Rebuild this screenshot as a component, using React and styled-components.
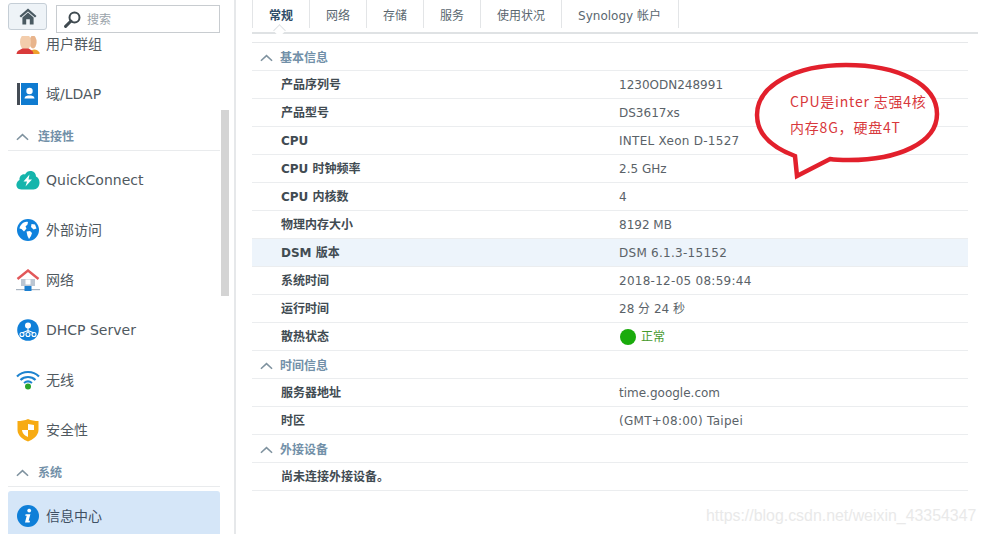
import React from "react";
import styled, { createGlobalStyle } from "styled-components";

const sans = `"DejaVu Sans", "Noto Sans CJK SC", sans-serif`;

const GlobalStyle = createGlobalStyle`
    html, body {
        margin: 0;
        padding: 0;
        background: #fff;
        overflow: hidden;
    }
    * {
        box-sizing: border-box;
    }
`;

const Chevron = () => (
    <ChevronSvg viewBox="0 0 14 8">
        <path d="M1 7 L7 1.5 L13 7" fill="none" stroke="#7f929f" strokeWidth="1.7" />
    </ChevronSvg>
);

const HomeIcon = () => (
    <svg width="18" height="17" viewBox="0 0 18 17">
        <path d="M9 0.5 L0.5 8 L2 9.6 L9 3.4 L16 9.6 L17.5 8 Z" fill="#4a5a62" />
        <path d="M3.4 9.4 L9 4.6 L14.6 9.4 V16.5 H10.8 V11.2 H7.2 V16.5 H3.4 Z" fill="#4a5a62" />
    </svg>
);

const SearchIcon = () => (
    <svg width="17" height="17" viewBox="0 0 17 17">
        <circle cx="10.5" cy="6.5" r="5" fill="none" stroke="#3f4a50" strokeWidth="2" />
        <path d="M7 10 L1.6 15.4" stroke="#3f4a50" strokeWidth="3" strokeLinecap="round" />
    </svg>
);

const UsersIcon = () => (
    <svg width="24" height="24" viewBox="0 0 24 24">
        <ellipse cx="17" cy="10" rx="3.6" ry="6.5" fill="#e8b48c" />
        <path d="M14 20 C15 17 21 16 23.5 20.5 V22 H14 Z" fill="#eea12c" />
        <ellipse cx="9.5" cy="10" rx="5.5" ry="8" fill="#f3cdac" />
        <path d="M0.5 22 C1 18 5 17.5 6.5 16.5 H12.5 C14 17.5 17 18 17.5 22 Z" fill="#d93a3a" />
    </svg>
);

const LdapIcon = () => (
    <svg width="22" height="22" viewBox="0 0 22 22">
        <rect x="0" y="0" width="3" height="22" fill="#444c55" />
        <rect x="4" y="0" width="17" height="22" fill="#0f7bd0" />
        <circle cx="12.5" cy="8" r="3.2" fill="#fff" />
        <path d="M7.5 15.5 C8 12.5 10.5 12.5 12.5 12.5 C14.5 12.5 17 12.5 17.5 15.5 Z" fill="#fff" />
    </svg>
);

const QuickConnectIcon = () => (
    <svg width="24" height="20" viewBox="0 0 24 20">
        <path d="M5.5 19.5 C1.5 19.5 0 16.5 0.5 14 C1 11.5 2.5 10.5 3.5 10 C3 6 6.5 3.5 9 4.5 C10.5 1.5 13 0.5 15.5 1 C18.5 1.5 20 4 20 6.5 C22.5 7.5 23.5 10 23.5 12.5 C23.5 16.5 21 19.5 17.5 19.5 Z" fill="#15b5ac" />
        <path d="M13.5 4.5 L7.5 11.5 H11 L9.5 16.5 L16 9.5 H12.5 Z" fill="#fff" />
    </svg>
);

const GlobeIcon = () => (
    <svg width="22" height="22" viewBox="0 0 22 22">
        <circle cx="11" cy="11" r="11" fill="#0f82dd" />
        <path d="M4 6 C6 3 9 2.5 11 3 L10.5 5.5 L8.5 7.5 L9.5 9.5 L7 12.5 L4.5 10 L2.5 9.5 C2.7 8 3.2 7 4 6 Z" fill="#fff" />
        <path d="M9.5 12.5 L13 12 L15 14 L14 17 L12 20 L10.5 17 Z" fill="#fff" />
        <path d="M14.5 5 L18 5.5 L19.5 9.5 L16.5 10.5 L14 8 Z" fill="#fff" />
    </svg>
);

const NetworkIcon = () => (
    <svg width="24" height="23" viewBox="0 0 24 23">
        <path d="M5 10 H19 V17 H5 Z" fill="#bcc6d2" />
        <rect x="9.5" y="10.5" width="5" height="5" fill="#fff" />
        <path d="M1.5 10 L12 1.5 L22.5 10" fill="none" stroke="#e2585a" strokeWidth="2.4" />
        <rect x="0" y="20" width="24" height="1.2" fill="#a9b4c0" />
        <rect x="8.5" y="17" width="7" height="5" fill="#1b7fd0" />
    </svg>
);

const DhcpIcon = () => (
    <svg width="22" height="22" viewBox="0 0 22 22">
        <circle cx="11" cy="11" r="10.8" fill="#0f7fd8" />
        <circle cx="11" cy="6.5" r="3" fill="#fff" />
        <path d="M11 9 V13 M11 11.5 L5 14 M11 11.5 L17 14" stroke="#fff" strokeWidth="1.1" fill="none" />
        <circle cx="5" cy="15.5" r="2" fill="none" stroke="#fff" strokeWidth="1.1" />
        <circle cx="11" cy="15.5" r="2" fill="none" stroke="#fff" strokeWidth="1.1" />
        <circle cx="17" cy="15.5" r="2" fill="none" stroke="#fff" strokeWidth="1.1" />
    </svg>
);

const WifiIcon = () => (
    <svg width="24" height="20" viewBox="0 0 24 20">
        <path d="M1 6.5 C7 0.5 17 0.5 23 6.5" fill="none" stroke="#1d83cf" strokeWidth="2.2" />
        <path d="M4.5 10 C8.5 6 15.5 6 19.5 10" fill="none" stroke="#1d83cf" strokeWidth="2.2" />
        <path d="M8 13 C10.5 11 13.5 11 16 13" fill="none" stroke="#1d83cf" strokeWidth="2" />
        <circle cx="12" cy="16.5" r="3" fill="#2aa42a" />
    </svg>
);

const ShieldIcon = () => (
    <svg width="22" height="23" viewBox="0 0 22 23">
        <path d="M0.5 2 C4 2 8 1.5 11 0 C14 1.5 18 2 21.5 2 V11 C21.5 17 15 21 11 22.5 C7 21 0.5 17 0.5 11 Z" fill="#f7ab13" />
        <path d="M11 5 C13 5.5 15 5.8 17 6 V11 H11 Z" fill="#fff" />
        <path d="M5 11 H11 V18 C8.5 17 5.5 15 5 11 Z" fill="#fff" />
    </svg>
);

const InfoIcon = () => (
    <svg width="22" height="22" viewBox="0 0 22 22">
        <circle cx="11" cy="11" r="11" fill="#0f7fd8" />
        <circle cx="12.2" cy="5.6" r="1.9" fill="#fff" />
        <path d="M8.6 9.2 H13.4 L11.6 15.8 H13 L12.6 17.4 H8 L9.7 10.8 H8.2 Z" fill="#fff" />
    </svg>
);

const tabs = ["常规", "网络", "存储", "服务", "使用状况", "Synology 帐户"];

const sections = [
    {
        title: "基本信息",
        rows: [
            { label: "产品序列号", value: "1230ODN248991" },
            { label: "产品型号", value: "DS3617xs" },
            { label: "CPU", value: "INTEL Xeon D-1527", wide: true },
            { label: "CPU 时钟频率", value: "2.5 GHz" },
            { label: "CPU 内核数", value: "4" },
            { label: "物理内存大小", value: "8192 MB" },
            { label: "DSM 版本", value: "DSM 6.1.3-15152", active: true, wide: true },
            { label: "系统时间", value: "2018-12-05 08:59:44", wide: true },
            { label: "运行时间", value: "28 分 24 秒" },
            { label: "散热状态", status: "正常" },
        ],
    },
    {
        title: "时间信息",
        rows: [
            { label: "服务器地址", value: "time.google.com" },
            { label: "时区", value: "(GMT+08:00) Taipei", wide: true },
        ],
    },
    {
        title: "外接设备",
        rows: [{ label: "尚未连接外接设备。", value: "" }],
    },
];

const App = () => {
    return (
        <Page>
            <GlobalStyle />
            <Sidebar>
                <TopBar>
                    <HomeButton>
                        <HomeIcon />
                    </HomeButton>
                    <SearchBox>
                        <SearchIcon />
                        <SearchText>搜索</SearchText>
                    </SearchBox>
                </TopBar>
                <NavList>
                    <NavItem $first>
                        <IconSlot><UsersIcon /></IconSlot>用户群组
                    </NavItem>
                    <NavItem>
                        <IconSlot><LdapIcon /></IconSlot>域/LDAP
                    </NavItem>
                    <NavSection>
                        <Chevron />
                        连接性
                    </NavSection>
                    <NavItem>
                        <IconSlot><QuickConnectIcon /></IconSlot>QuickConnect
                    </NavItem>
                    <NavItem>
                        <IconSlot><GlobeIcon /></IconSlot>外部访问
                    </NavItem>
                    <NavItem>
                        <IconSlot><NetworkIcon /></IconSlot>网络
                    </NavItem>
                    <NavItem>
                        <IconSlot><DhcpIcon /></IconSlot>DHCP Server
                    </NavItem>
                    <NavItem>
                        <IconSlot><WifiIcon /></IconSlot>无线
                    </NavItem>
                    <NavItem>
                        <IconSlot><ShieldIcon /></IconSlot>安全性
                    </NavItem>
                    <NavSection>
                        <Chevron />
                        系统
                    </NavSection>
                    <NavItem $active>
                        <IconSlot><InfoIcon /></IconSlot>信息中心
                    </NavItem>
                </NavList>
                <ScrollThumb />
            </Sidebar>

            <Main>
                <TabBar>
                    {tabs.map((tab, i) => (
                        <Tab key={tab} $active={i === 0}>
                            {tab}
                        </Tab>
                    ))}
                    <TabNotch />
                </TabBar>
                <Details>
                    {sections.map((section) => (
                        <React.Fragment key={section.title}>
                            <SectionHead>
                                <Chevron />
                                {section.title}
                            </SectionHead>
                            {section.rows.map((row) => (
                                <Row key={row.label} $active={row.active}>
                                    <Label>{row.label}</Label>
                                    {row.status ? (
                                        <Status>
                                            <StatusDot />
                                            {row.status}
                                        </Status>
                                    ) : (
                                        <Value $wide={row.wide}>{row.value}</Value>
                                    )}
                                </Row>
                            ))}
                        </React.Fragment>
                    ))}
                </Details>
            </Main>

            <Bubble>
                <BubbleShape viewBox="0 0 190 122">
                    <path
                        d="M41 94 C14 84 3 69 3 53 C3 23 42 3 92 3 C144 3 183 22 183 52 C183 81 144 98 95 98 C88 98 82 98 76 97 L43 114 Z"
                        fill="#fff"
                        stroke="#e2202c"
                        strokeWidth="4.5"
                    />
                </BubbleShape>
                <BubbleText>
                    <span>CPU是inter 志强4核</span>
                    <span>内存8G，硬盘4T</span>
                </BubbleText>
            </Bubble>

            <Watermark>https://blog.csdn.net/weixin_43354347</Watermark>
        </Page>
    );
};

const Page = styled.div`
    position: relative;
    display: flex;
    width: 987px;
    height: 534px;
    overflow: hidden;
    background: #fff;
    font-family: ${sans};
`;

const Sidebar = styled.aside`
    position: relative;
    display: flex;
    flex-direction: column;
    flex: none;
    width: 236px;
    height: 534px;
    border-right: 2px solid #e6e8ea;
`;

const TopBar = styled.div`
    display: flex;
    flex: none;
    align-items: flex-start;
    gap: 9px;
    height: 36px;
    padding: 3px 0 0 8px;
`;

const HomeButton = styled.div`
    display: flex;
    align-items: center;
    justify-content: center;
    width: 39px;
    height: 27px;
    background: #eef3f7;
    border: 1px solid #c5ced6;
    border-radius: 3px;
`;

const SearchBox = styled.div`
    display: flex;
    align-items: center;
    gap: 6px;
    width: 164px;
    height: 28px;
    margin-top: 2px;
    padding-left: 7px;
    border: 1px solid #c8ccd0;
`;

const SearchText = styled.span`
    padding-top: 2px;
    font-size: 12px;
    line-height: 16px;
    color: #9aa3aa;
`;

const NavList = styled.nav`
    flex: 1;
    min-height: 0;
    overflow: hidden;
    padding: 0 14px 0 8px;
`;

const NavItem = styled.div`
    display: flex;
    align-items: center;
    height: 50px;
    margin-top: ${(p) => (p.$first ? "-17px" : "0")};
    padding-left: 8px;
    font-size: 14px;
    line-height: 18px;
    color: ${(p) => (p.$active ? "#3f5064" : "#50595f")};
    background: ${(p) => (p.$active ? "#d5e6f8" : "transparent")};
    border-radius: 3px 3px 0 0;
`;

const IconSlot = styled.span`
    display: flex;
    flex: none;
    align-items: center;
    justify-content: center;
    width: 24px;
    margin-right: 6px;
`;

const NavSection = styled.div`
    display: flex;
    align-items: center;
    height: 32px;
    margin-bottom: 4px;
    padding: 4px 0 0 8px;
    font-size: 12px;
    line-height: 16px;
    font-weight: 600;
    color: #7290a8;
    border-bottom: 1px solid #e9ebed;
`;

const ChevronSvg = styled.svg`
    flex: none;
    width: 13px;
    height: 8px;
    margin-right: 9px;
`;

const ScrollThumb = styled.div`
    position: absolute;
    top: 110px;
    left: 221px;
    width: 8px;
    height: 186px;
    background: #d4d4d4;
`;

const Main = styled.main`
    flex: 1;
    min-width: 0;
    padding: 0 9px 0 16px;
`;

const TabBar = styled.div`
    position: relative;
    display: flex;
    height: 34px;
    padding-bottom: 6px;
    border-bottom: 2px solid #dfe2e4;
`;

const Tab = styled.div`
    display: flex;
    align-items: center;
    height: 28px;
    padding: 3px 16px 0;
    font-size: 12px;
    line-height: 16px;
    font-weight: ${(p) => (p.$active ? 700 : 400)};
    color: ${(p) => (p.$active ? "#2f4d68" : "#5a6770")};
    border-right: 1px solid #e3e5e7;

    &:first-child {
        border-left: 1px solid #e3e5e7;
    }

    &:last-of-type {
        padding-right: 17px;
    }
`;

const TabNotch = styled.span`
    position: absolute;
    left: 23px;
    bottom: -3px;
    width: 9px;
    height: 9px;
    background: #fff;
    border-top: 1px solid #dfe2e4;
    border-left: 1px solid #dfe2e4;
    transform: rotate(45deg);
`;

const Details = styled.div`
    width: 716px;
    margin-top: 8px;
    border-top: 1px solid #e6e8ea;
`;

const SectionHead = styled.div`
    display: flex;
    align-items: center;
    height: 28px;
    padding: 3px 0 0 8px;
    font-size: 12px;
    line-height: 16px;
    font-weight: 600;
    color: #7290a8;
    border-bottom: 1px solid #ebedef;

    ${ChevronSvg} {
        margin-right: 7px;
    }
`;

const Row = styled.div`
    display: grid;
    grid-template-columns: 338px 1fr;
    align-items: center;
    height: 28px;
    padding-left: 29px;
    font-size: 12px;
    line-height: 16px;
    background: ${(p) => (p.$active ? "#edf4fb" : "transparent")};
    border-bottom: 1px solid #ebedef;
`;

const Label = styled.div`
    font-weight: 700;
    color: #414b52;
    white-space: nowrap;
`;

const Value = styled.div`
    color: #5a6268;
    white-space: nowrap;
    letter-spacing: ${(p) => (p.$wide ? "0.27px" : "0")};
`;

const Status = styled.div`
    display: flex;
    align-items: center;
    gap: 5px;
    color: #479a2d;
`;

const StatusDot = styled.span`
    width: 16px;
    height: 16px;
    margin-left: 1px;
    background: #1aab0c;
    border-radius: 50%;
`;

const Bubble = styled.div`
    position: absolute;
    top: 62px;
    left: 754px;
    width: 190px;
    height: 122px;
`;

const BubbleShape = styled.svg`
    position: absolute;
    inset: 0;
    width: 190px;
    height: 122px;
`;

const BubbleText = styled.div`
    position: absolute;
    top: 30px;
    left: 36px;
    display: flex;
    flex-direction: column;
    gap: 7px;
    font-family: "Noto Sans CJK SC", sans-serif;
    font-size: 14px;
    line-height: 19px;
    letter-spacing: 0.8px;
    color: #d8383c;
    white-space: nowrap;
`;

const Watermark = styled.div`
    position: absolute;
    top: 506px;
    left: 706px;
    font-family: "Liberation Sans", sans-serif;
    font-size: 15.9px;
    line-height: 20px;
    color: #e9e9e9;
    white-space: nowrap;
`;

export default App;
